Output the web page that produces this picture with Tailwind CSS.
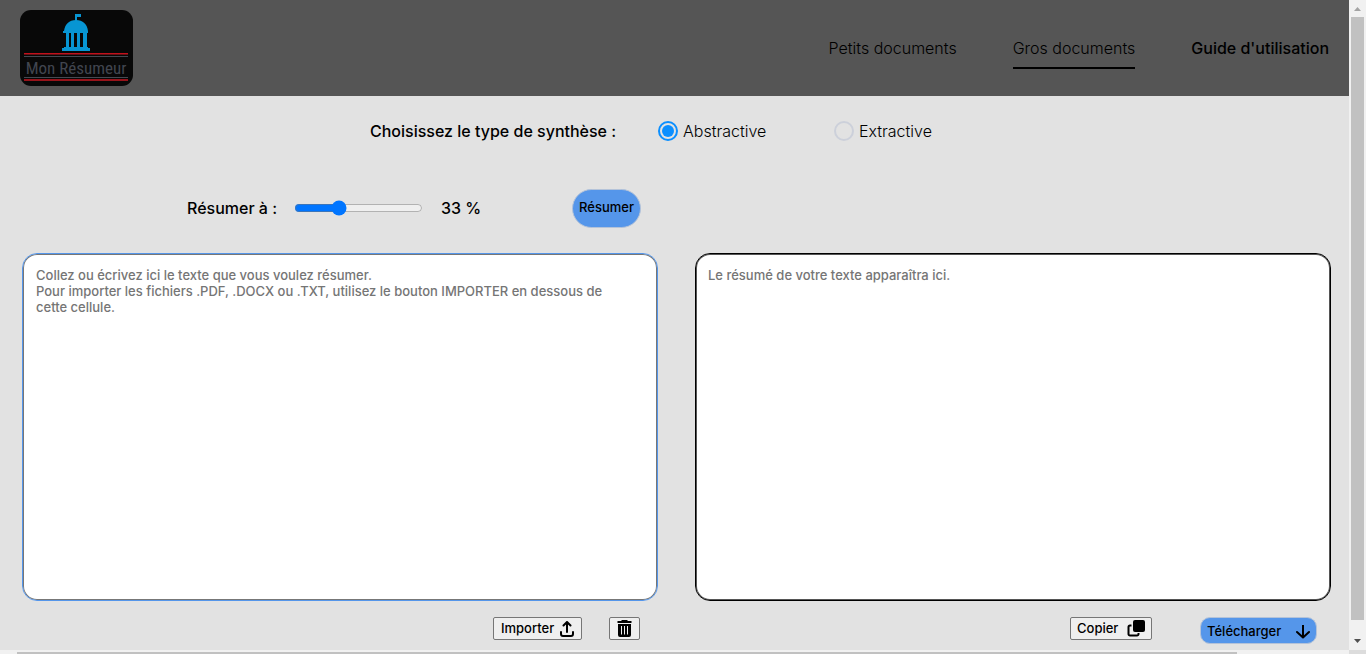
<!DOCTYPE html>
<html lang="fr">
<head>
<meta charset="utf-8">
<title>Mon Résumeur</title>
<script src="https://cdn.jsdelivr.net/npm/@tailwindcss/browser@4"></script>
</head>
<body class="flex h-screen overflow-hidden bg-[#e2e2e2] font-['Inter',sans-serif] text-base text-black">
  <div class="flex min-w-0 flex-1 flex-col">
    <header class="flex h-24 shrink-0 items-center justify-between bg-[#555555] pr-5 pl-5">
      <a href="#" aria-label="Mon Résumeur" class="block">
        <svg class="h-[76px] w-[113px]" viewBox="0 0 113 76">
          <rect width="113" height="76" rx="11" fill="#080808"/>
          <g fill="#0795d3">
            <path d="M55 4h6v3h-4v4h-2z"/>
            <path d="M44 21c1-7 5-11 12-11s11 4 12 11v2H43v-2zM46 23h3v14h-3zM51 23h3v14h-3zM57 23h3v14h-3zM63 23h4v14h-4z"/>
            <path d="M44 37h24v1h2v3H42v-3h2z"/>
          </g>
          <path d="M4 43.500h104" stroke="#c3101b"/><path d="M4 44.500h104" stroke="#651015"/>
          <path d="M4 46.500h104M4 67.500h104" stroke="#454952"/>
          <path d="M4 70h104" stroke="#97131a" stroke-width="2"/>
          <text x="56" y="64" text-anchor="middle" font-family="'Roboto Condensed', 'Open Sans Condensed', sans-serif" font-size="17" fill="#41454f">Mon Résumeur</text>
        </svg>
      </a>
      <nav class="flex items-center gap-14 pt-px font-light">
        <a href="#" class="border-b-2 border-transparent pt-2 pb-[7px]">Petits documents</a>
        <a href="#" class="border-b-2 border-black pt-2 pb-[7px]">Gros documents</a>
        <a href="#" class="border-b-2 border-transparent pt-2 pb-[7px] font-medium">Guide d'utilisation</a>
      </nav>
    </header>

    <main class="flex min-h-0 flex-1 flex-col">
      <div role="radiogroup" aria-labelledby="type-label" class="flex h-[70px] shrink-0 items-center pl-[370px]">
        <span id="type-label" class="w-72 font-medium">Choisissez le type de synthèse :</span>
        <label class="flex w-44 items-center gap-[5px] font-light">
          <input type="radio" name="type" checked class="h-5 w-5 appearance-none rounded-full border-2 border-[#ccd0da] checked:border-[#0b8fff] checked:bg-[#0b8fff] checked:bg-clip-content checked:p-[2px]">Abstractive
        </label>
        <label class="flex items-center gap-[5px] font-light">
          <input type="radio" name="type" class="h-5 w-5 appearance-none rounded-full border-2 border-[#ccd0da] checked:border-[#0b8fff] checked:bg-[#0b8fff] checked:bg-clip-content checked:p-[2px]">Extractive
        </label>
      </div>

      <div class="flex h-[84px] shrink-0 items-center pl-[187px] font-medium">
        <label for="taux" class="w-[107px]">Résumer à :</label>
        <input id="taux" type="range" min="0" max="100" value="33" class="w-[129px] accent-[#0075ff]">
        <output for="taux" class="ml-[18px] w-[131px]">33 %</output>
        <button class="h-[39px] w-[69px] rounded-[20px] border border-[#b4c3d9] bg-[#5596ea] text-[13px]">Résumer</button>
      </div>

      <div class="mt-[3px] grid grid-cols-2 gap-[37px] pr-[18px] pl-[22px]">
        <section class="flex flex-col">
          <textarea aria-label="Texte à résumer" class="block h-[348px] resize-none rounded-[15px] border border-[#5596ea] bg-white pt-[13px] pr-8 pl-[13px] text-[13px] leading-4 font-medium inset-ring inset-ring-[#777777] outline-none placeholder:text-[#757575]" placeholder="Collez ou écrivez ici le texte que vous voulez résumer.&#10;Pour importer les fichiers .PDF, .DOCX ou .TXT, utilisez le bouton IMPORTER en dessous de cette cellule."></textarea>
          <div class="mt-4 flex items-start justify-end gap-[27px] pr-[18px]">
            <button class="flex h-[23px] w-[89px] items-center justify-between rounded-[2px] border border-[#767676] bg-[#efefef] pr-1.5 pl-[7px] text-[13px] font-medium">Importer
              <svg class="h-4 w-4" viewBox="0 0 16 16" fill="none" stroke="#000" stroke-width="2" stroke-linecap="round" stroke-linejoin="round"><path d="M8 11V1.500M4.500 4.500 8 1l3.500 3.500M2 11v2a2 2 0 0 0 2 2h8a2 2 0 0 0 2-2v-2"/></svg>
            </button>
            <button aria-label="Supprimer" class="flex h-[23px] w-[31px] items-center justify-center rounded-[2px] border border-[#767676] bg-[#efefef]">
              <svg class="h-[17px] w-[15px]" viewBox="0 0 15 17"><path d="M5 0h5l1 1h3.500v2H.500V1H4zM1 4h13v11a2 2 0 0 1-2 2H3a2 2 0 0 1-2-2z"/><path d="M4.500 6v8.500M7.500 6v8.500M10.500 6v8.500" stroke="#efefef"/></svg>
            </button>
          </div>
        </section>

        <section class="flex flex-col">
          <textarea aria-label="Résumé" readonly class="block h-[348px] resize-none rounded-[15px] border border-black bg-white px-3 pt-[13px] text-[13px] leading-4 font-medium inset-ring inset-ring-[#555555] outline-none placeholder:text-[#757575]" placeholder="Le résumé de votre texte apparaîtra ici."></textarea>
          <div class="mt-4 flex items-start justify-end gap-12 pr-[14px]">
            <button class="flex h-[23px] w-[82px] items-center justify-between rounded-[2px] border border-[#767676] bg-[#efefef] px-1.5 text-[13px] font-medium">Copier
              <svg class="h-[17px] w-[18px]" viewBox="0 0 18 17"><rect x="6" width="12" height="12" rx="2"/><path d="M4.500 5.500H3A1.500 1.500 0 0 0 1.500 7v7A1.500 1.500 0 0 0 3 15.500h7a1.500 1.500 0 0 0 1.500-1.500v-1" fill="none" stroke="#000" stroke-width="2"/></svg>
            </button>
            <button class="flex h-[27px] w-[117px] items-center justify-between rounded-[10px] border border-[#b4c3d9] bg-[#5596ea] px-[6px] pt-0.5 text-[13px] font-medium">Télécharger
              <svg class="h-3.5 w-3.5" viewBox="0 0 14 14" fill="none" stroke="#000" stroke-width="2" stroke-linecap="round" stroke-linejoin="round"><path d="M7 0v12M1 7l6 5.500L13 7"/></svg>
            </button>
          </div>
        </section>
      </div>
    </main>

    <div class="flex h-1 shrink-0 items-end bg-[#f1f1f1] pr-28 pl-[17px]"><div class="h-0.5 w-full bg-[#c1c1c1]"></div></div>
  </div>

  <div class="flex w-[17px] shrink-0 flex-col items-center bg-[#f1f1f1]">
    <svg class="h-[17px] w-[17px] shrink-0" viewBox="0 0 17 17"><path d="M5 11h7L8.500 7z" fill="#a3a3a3"/></svg>
    <div class="w-[13px] flex-1 bg-[#c1c1c1]"></div>
    <div class="flex h-[30px] w-full shrink-0 items-end"><svg class="h-[17px] w-[17px]" viewBox="0 0 17 17"><path d="M5 6h7l-3.500 4z" fill="#505050"/></svg></div>
    <div class="h-1 w-full shrink-0 bg-[#dcdcdc]"></div>
  </div>
</body>
</html>
